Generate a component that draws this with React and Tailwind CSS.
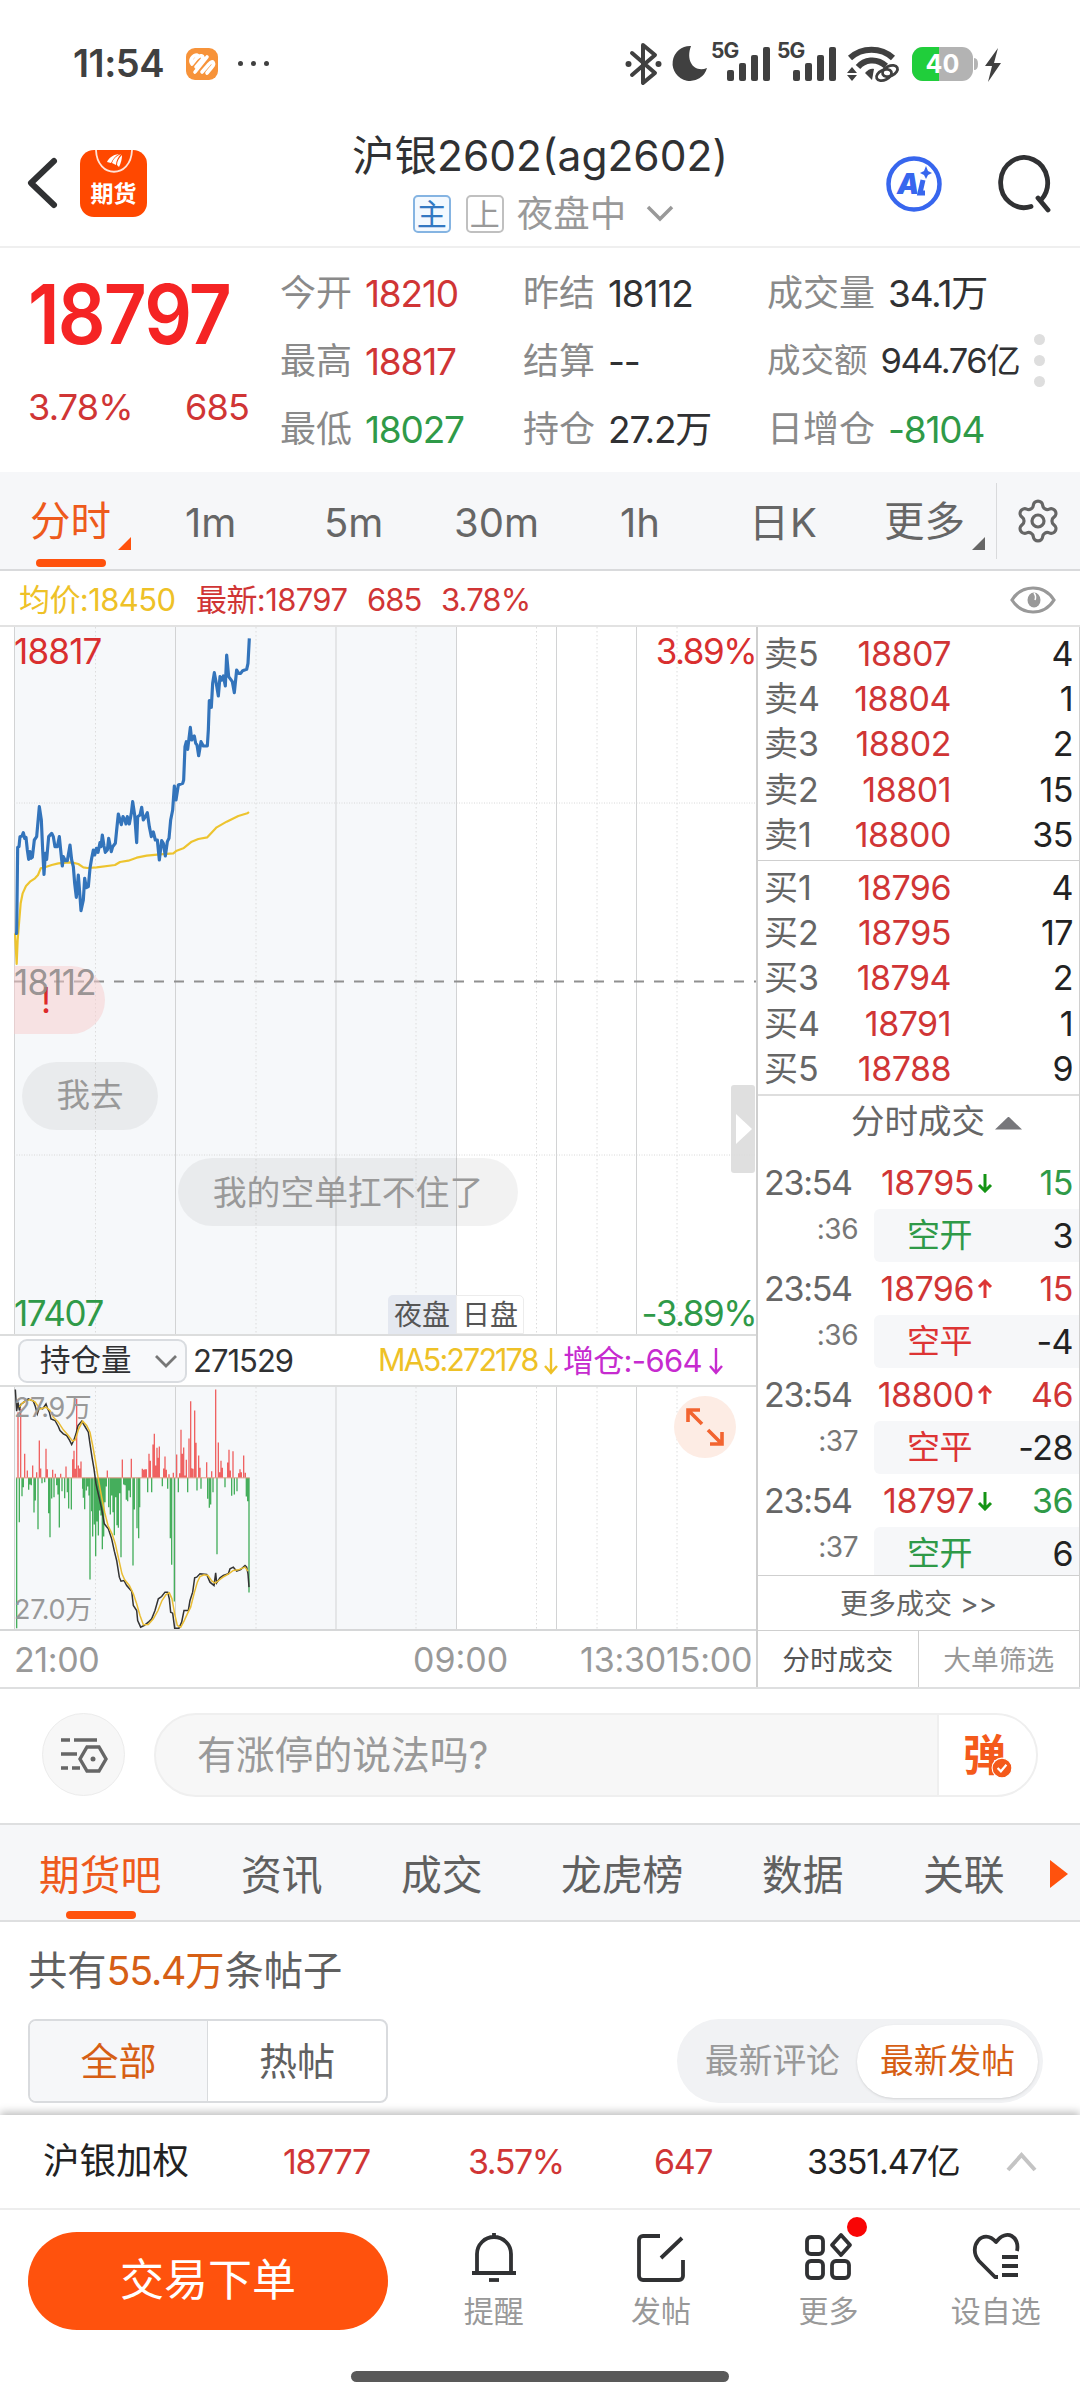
import { Settings } from 'lucide-react'

const PRICE =
  '45,940 50,940 53,682 57,680 60,650 66,648 70,638 74,655 78,652 82,690 86,718 90,695 93,715 97,712 103,660 110,650 118,560 124,600 128,690 132,763 136,700 140,718 146,650 155,640 160,650 165,680 172,680 178,650 182,690 187,738 190,710 196,722 202,722 210,675 215,720 220,740 224,790 229,832 235,765 240,830 243,872 250,840 254,775 259,803 265,800 270,745 275,715 280,690 284,705 289,685 294,697 300,668 303,680 307,645 312,678 316,697 322,690 326,655 330,675 334,695 338,680 346,670 350,630 355,582 360,600 364,614 369,590 375,600 378,612 382,590 388,612 394,580 398,545 404,585 410,668 413,590 420,585 425,562 430,600 436,590 442,578 448,620 454,650 460,636 466,660 472,660 478,720 485,662 490,670 496,708 502,665 507,655 512,600 518,570 523,498 528,540 535,495 548,490 551,480 555,380 559,365 563,388 571,322 575,360 583,348 587,370 591,375 596,407 603,365 610,378 622,378 625,330 628,242 634,262 638,190 643,158 648,185 655,228 660,170 665,180 670,168 676,198 680,105 686,170 697,185 703,218 710,150 716,160 722,160 728,152 740,148 744,130 748,55'

const AVERAGE =
  '45,940 50,1032 53,960 62,850 68,820 78,798 90,785 105,775 114,765 122,745 135,742 155,735 175,730 200,728 215,727 235,732 250,742 262,744 290,742 345,735 360,726 385,722 410,713 440,707 480,703 520,700 530,692 550,685 575,665 595,657 622,652 650,622 680,605 715,588 742,580 747,576'

const OPEN_INTEREST =
  '46,27 50,92 54,65 58,90 62,72 68,68 75,62 85,55 100,62 106,78 112,100 118,82 128,85 138,70 143,85 148,95 153,115 165,120 175,138 180,150 190,160 200,165 208,178 215,192 222,178 228,160 234,135 245,122 255,138 265,155 270,190 276,230 282,265 288,310 296,345 305,385 313,430 325,445 335,475 343,512 350,540 358,590 363,602 372,600 380,615 395,632 400,675 410,690 413,720 422,740 432,735 445,725 455,715 465,690 475,655 485,648 495,635 503,635 508,655 512,695 518,698 524,743 537,743 545,725 552,690 565,690 570,660 578,635 584,592 590,590 600,580 620,582 630,605 642,615 647,577 650,607 660,592 670,585 685,580 690,565 700,560 710,572 722,567 735,555 740,560 744,580 747,620'

const OPEN_INTEREST_MA =
  '58,80 68,66 90,57 105,64 120,86 138,80 150,90 160,110 175,125 190,148 205,165 218,182 226,178 236,145 248,122 260,135 270,155 278,195 286,240 294,290 304,345 314,395 324,435 336,460 346,490 356,535 366,580 374,598 388,615 400,640 410,670 420,705 430,733 445,732 460,715 474,690 486,660 498,642 508,637 516,655 524,700 532,735 542,740 552,722 562,700 572,680 582,640 592,605 600,588 612,583 624,585 636,602 646,608 656,600 672,588 686,580 700,570 715,568 735,560 744,572'

const RISES = [
  [54, 95], [62, 85], [74, 220], [82, 270], [98, 255], [110, 275], [118, 180], [122, 264], [138, 205], [142, 266],
  [158, 268], [166, 280], [182, 280], [198, 258], [218, 236], [222, 211], [226, 265], [230, 55], [235, 255], [239, 264],
  [243, 243], [322, 270], [367, 237], [394, 235], [427, 265], [431, 268], [435, 266], [439, 266], [447, 220], [451, 241],
  [459, 192], [463, 160], [467, 255], [471, 202], [475, 232], [478, 198], [491, 264], [495, 228], [499, 268], [507, 281],
  [520, 277], [530, 222], [539, 278], [543, 148], [547, 220], [551, 201], [555, 285], [559, 238], [567, 174], [572, 62],
  [575, 263], [579, 265], [584, 90], [588, 187], [596, 225], [600, 262], [620, 245], [635, 272], [647, 27], [655, 186],
  [659, 275], [663, 241], [667, 262], [683, 246], [687, 208], [691, 270], [699, 212], [716, 278], [720, 266], [724, 275],
  [731, 225], [736, 277],
]

const FALLS = [
  [50, 743], [58, 425], [66, 347], [70, 320], [86, 328], [90, 312], [94, 314], [102, 396], [106, 360], [114, 446],
  [126, 308], [134, 305], [146, 398], [150, 470], [155, 354], [162, 350], [170, 314], [174, 342], [178, 441], [186, 332],
  [194, 353], [202, 335], [206, 384], [214, 387], [248, 325], [250, 352], [254, 386], [259, 330], [263, 318], [267, 345],
  [270, 597], [275, 392], [278, 468], [283, 432], [287, 527], [291, 423], [295, 465], [299, 390], [303, 405], [307, 506],
  [311, 468], [315, 365], [319, 318], [326, 380], [331, 402], [335, 345], [339, 395], [343, 464], [347, 350], [351, 434],
  [355, 442], [359, 338], [363, 530], [371, 312], [375, 314], [379, 358], [383, 362], [387, 330], [391, 350], [399, 555],
  [403, 387], [411, 443], [416, 473], [419, 380], [443, 335], [455, 335], [487, 317], [503, 325], [511, 473], [515, 553],
  [523, 663], [535, 335], [563, 335], [591, 330], [603, 325], [623, 355], [628, 382], [632, 372], [639, 335], [651, 521],
  [675, 320], [695, 346], [703, 342], [711, 332], [739, 348], [743, 362], [747, 636],
]

const SOLID_X = [175.5, 336, 456.5, 556.5, 636.5]
const DOTTED_X = [95.5, 256, 416, 536.5, 597, 677]

const SELLS = [
  ['卖5', '18807', '4'],
  ['卖4', '18804', '1'],
  ['卖3', '18802', '2'],
  ['卖2', '18801', '15'],
  ['卖1', '18800', '35'],
]

const BUYS = [
  ['买1', '18796', '4'],
  ['买2', '18795', '17'],
  ['买3', '18794', '2'],
  ['买4', '18791', '1'],
  ['买5', '18788', '9'],
]

const TRADES = [
  { sec: ':36', price: '18795', up: false, qty: '15', kind: '空开', delta: '3' },
  { sec: ':36', price: '18796', up: true, qty: '15', kind: '空平', delta: '-4' },
  { sec: ':37', price: '18800', up: true, qty: '46', kind: '空平', delta: '-28' },
  { sec: ':37', price: '18797', up: false, qty: '36', kind: '空开', delta: '6' },
]

function StatusBar() {
  return (
    <div className="h-[125px] pt-[2px] flex items-center text-[#404040]">
      <span className="ml-[73px] w-[113px] text-[38px] font-semibold tracking-[-0.5px] whitespace-nowrap">11:54</span>
      <svg className="w-8 h-8" viewBox="0 0 32 32">
        <rect width="32" height="32" rx="9" fill="#f7933a" />
        <path d="M6 16l4-5c4-5 9-4 6 1l-6 7M9 24l12-15M16 24l7-8c4-5 6 0 3 3l-5 6M6 16c-3-4 1-9 5-9" fill="none" stroke="#fff" strokeWidth="3.600" strokeLinecap="round" strokeLinejoin="round" />
      </svg>
      <span className="ml-[20px] flex gap-[8px]">
        <i className="w-[5px] h-[5px] rounded-full bg-[#404040]" />
        <i className="w-[5px] h-[5px] rounded-full bg-[#404040]" />
        <i className="w-[5px] h-[5px] rounded-full bg-[#404040]" />
      </span>
      <svg className="ml-auto mr-[75px] w-[380px] h-[50px] overflow-visible" viewBox="0 -2 380 50" fill="#404040">
        {/* bluetooth */}
        <path d="M7 12l23 20-12 10V4l12 10L7 34" fill="none" stroke="#404040" strokeWidth="4" strokeLinejoin="round" strokeLinecap="round" />
        <circle cx="3.500" cy="23" r="3" />
        <circle cx="33.500" cy="23" r="3" />
        {/* do not disturb */}
        <path d="M66 5a17.500 17.500 0 1 0 16 22c-12 5-22-6-16-22z" />
        {/* signal */}
        {[86, 152].map((x) => (
          <g key={x} transform={`translate(${x} 0)`}>
            <text x="0" y="16.500" fontSize="21" fontWeight="700" letterSpacing="-1">5G</text>
            <rect x="16" y="29" width="7" height="11" rx="2" />
            <rect x="28" y="22" width="7" height="18" rx="2" />
            <rect x="40" y="14" width="7" height="26" rx="2" />
            <rect x="52" y="6" width="7" height="34" rx="2" />
          </g>
        ))}
        {/* wifi */}
        <path d="M225 17c12-11 31-11 43 0" fill="none" stroke="#404040" strokeWidth="6" />
        <path d="M233 26c6-7 18-10 28-1" fill="none" stroke="#404040" strokeWidth="6" />
        <path d="M240 32c3-4 7-5 9-4l-2 11z" />
        <path d="M222 32l5-6 5 6zM222 34l5 6 5-6z" />
        <g fill="none" stroke="#404040" strokeWidth="2.800">
          <ellipse cx="259" cy="34" rx="8" ry="5" transform="rotate(-25 259 34)" />
          <ellipse cx="265" cy="30" rx="8" ry="5" transform="rotate(-25 265 30)" />
        </g>
        {/* battery */}
        <rect x="287" y="6" width="61" height="34" rx="11" fill="#b3b3b3" />
        <path d="M314 6h-16a11 11 0 0 0-11 11v12a11 11 0 0 0 11 11h16z" fill="#20ce3b" />
        <path d="M349 17q4 0 4 6t-4 6z" fill="#b3b3b3" />
        <text x="317.500" y="32" fontSize="25" fontWeight="700" fill="#fff" textAnchor="middle">40</text>
        <path d="M373 7l-13 18h7l-4 16 13-19h-7z" />
      </svg>
    </div>
  )
}

function Header() {
  return (
    <div className="h-[123px] border-b-2 border-[#efefef] flex text-[#303133]">
      <div className="w-[300px] flex">
        <svg className="ml-[26px] mt-[31px] w-[34px] h-[54px]" viewBox="0 0 34 54">
          <path d="M28 5L5 27l23 22" fill="none" stroke="#303133" strokeWidth="6" strokeLinecap="round" strokeLinejoin="round" />
        </svg>
        <div className="ml-[20px] mt-[25px] w-[67px] h-[67px] rounded-[14px] bg-[#ff4800] flex flex-col items-center text-white">
          <svg className="w-[40px] h-[24px]" viewBox="0 0 40 24">
            <path d="M2 0c1 29 35 29 36 0" fill="none" stroke="#ffe3d8" strokeWidth="1.800" />
            <path d="M13 12c2-4 5-7 12-8-4 2-6 5-8 9zM18 13c1-4 4-7 9-9-3 3-5 7-5 11zM23 15c0-4 2-7 5-10 0 4-1 8-3 12z" fill="#fff" />
          </svg>
          <span className="mt-[9px] text-[23px] leading-none font-bold">期货</span>
        </div>
      </div>
      <div className="w-[480px] pt-[9px] flex flex-col items-center">
        <div className="text-[42.500px] leading-[44px] whitespace-nowrap">沪银2602(ag2602)</div>
        <div className="mt-[17px] ml-[8px] flex items-center leading-none">
          <span className="w-[38px] h-[38px] rounded-[5px] border-2 border-[#85b4e2] bg-[#f3f9ff] text-[30px] leading-none text-[#3378c2] flex items-center justify-center">主</span>
          <span className="ml-[15px] w-[38px] h-[38px] rounded-[5px] border-2 border-[#c0c0c0] text-[30px] leading-none text-[#999] flex items-center justify-center">上</span>
          <span className="ml-[13px] text-[36.500px] text-[#999]">夜盘中</span>
          <svg className="ml-[19px] w-[30px] h-[20px]" viewBox="0 0 30 20">
            <path d="M3 3l12 12L27 3" fill="none" stroke="#999" strokeWidth="3.500" />
          </svg>
        </div>
      </div>
      <svg className="ml-[106px] mt-[30px] w-[56px] h-[58px]" viewBox="0 0 56 58">
        <circle cx="28" cy="29" r="25.500" fill="none" stroke="#3766ee" strokeWidth="4.500" />
        <text x="11" y="39" fontSize="28" fontWeight="900" fontStyle="italic" fill="#3766ee">A</text>
        <path d="M37 25l-3 13h5" fill="none" stroke="#3766ee" strokeWidth="5" />
        <path d="M40 11l2 5 4 2-4 2-2 4-2-4-4-2 4-2z" fill="#3766ee" />
      </svg>
      <svg className="ml-[54px] mt-[30px] w-[56px] h-[58px]" viewBox="0 0 56 58">
        <path d="M35 51.500A23.500 25 0 1 1 45 45" fill="none" stroke="#303133" strokeWidth="4.800" strokeLinecap="round" />
        <path d="M42 43l10 12" stroke="#303133" strokeWidth="4.800" strokeLinecap="round" />
      </svg>
    </div>
  )
}

function Pair({ label, value, tone = 'text-[#303133]', small }) {
  return (
    <div className="h-[68px] flex items-center whitespace-nowrap">
      <span className={small ? 'text-[33.500px] text-[#8a8a8a]' : 'text-[36px] text-[#8a8a8a]'}>{label}</span>
      <span className={`ml-[13px] ${small ? 'text-[34.500px] tracking-[-1.500px]' : 'text-[37px] tracking-[-1.200px]'} ${tone}`}>{value}</span>
    </div>
  )
}

function Quote() {
  return (
    <div className="h-[224px] pt-[11px] flex leading-none">
      <div className="w-[280px] pl-[28px] pt-[21px] text-[#d03535]">
        <div className="h-[68px] flex items-center">
          <span className="origin-left scale-x-[0.9] text-[83px] font-semibold tracking-[-2px] text-[#f52424]">18797</span>
        </div>
        <div className="mt-[25px] w-[221px] h-[68px] flex items-center justify-between text-[36px] tracking-[-0.800px]">
          <span>3.78%</span>
          <span>685</span>
        </div>
      </div>
      <div className="w-[243px]">
        <Pair label="今开" value="18210" tone="text-[#d03535]" />
        <Pair label="最高" value="18817" tone="text-[#d03535]" />
        <Pair label="最低" value="18027" tone="text-[#2f9a48]" />
      </div>
      <div className="w-[244px]">
        <Pair label="昨结" value="18112" />
        <Pair label="结算" value="--" />
        <Pair label="持仓" value="27.2万" />
      </div>
      <div className="w-[262px]">
        <Pair label="成交量" value="34.1万" />
        <Pair label="成交额" value="944.76亿" small />
        <Pair label="日增仓" value="-8104" tone="text-[#2f9a48]" />
      </div>
      <div className="pt-[75px] ml-[5px] flex flex-col gap-[10px]">
        <i className="w-[11px] h-[11px] rounded-full bg-[#dedede]" />
        <i className="w-[11px] h-[11px] rounded-full bg-[#dedede]" />
        <i className="w-[11px] h-[11px] rounded-full bg-[#dedede]" />
      </div>
    </div>
  )
}

function PeriodTabs() {
  return (
    <div className="h-[99px] bg-[#f6f7f9] border-b-2 border-[#d9dadc] flex items-center leading-none text-[40px] text-[#666] whitespace-nowrap">
      <div className="relative w-[185px] h-full pt-[4px] pl-[30px] flex items-center text-[40.500px] text-[#ee5a1c]">
        分时
        <i className="absolute left-[118px] top-[65px] w-[13px] h-[13px] bg-[#ff520d] [clip-path:polygon(100%_0,100%_100%,0_100%)]" />
        <i className="absolute left-[36px] bottom-[2px] w-[70px] h-[8px] rounded-[4px] bg-[#ff520d]" />
      </div>
      <span className="pt-[4px] w-[139px]">1m</span>
      <span className="pt-[4px] w-[130px]">5m</span>
      <span className="pt-[4px] w-[166px]">30m</span>
      <span className="pt-[4px] w-[129px]">1h</span>
      <span className="pt-[4px] w-[135px] tracking-[1px]">日K</span>
      <div className="relative w-[112px] h-full pt-[4px] flex items-center text-[40.500px]">
        更多
        <i className="absolute left-[88px] top-[65px] w-[13px] h-[13px] bg-[#666] [clip-path:polygon(100%_0,100%_100%,0_100%)]" />
      </div>
      <i className="w-px h-[76px] bg-[#d9dadc]" />
      <Settings className="ml-[17px] w-[48px] h-[48px] text-[#666]" strokeWidth={1.6} />
    </div>
  )
}

function Legend() {
  return (
    <div className="h-[56px] pt-[3px] border-b-2 border-[#e2e2e2] flex items-center leading-none text-[31px] tracking-[-0.900px] text-[#d03535] whitespace-nowrap">
      <span className="ml-[19px] w-[177px] text-[#eec127] tracking-[-0.600px]">均价:18450</span>
      <span className="w-[171px] tracking-[-0.600px]">最新:18797</span>
      <span className="w-[74px]">685</span>
      <span>3.78%</span>
      <svg className="ml-auto mr-[24px] w-[46px] h-[30px]" viewBox="0 0 46 30">
        <path d="M2 15C12-1 34-1 44 15C34 31 12 31 2 15z" fill="none" stroke="#999" strokeWidth="3.200" />
        <ellipse cx="24" cy="15" rx="6.500" ry="7.500" fill="#999" />
        <path d="M24 8a7 7 0 0 1 1 7" fill="none" stroke="#fff" strokeWidth="1.500" />
      </svg>
    </div>
  )
}

function Grid({ height }) {
  return (
    <>
      <rect x="14" width="442.500" height={height} fill="#f6f8fa" />
      {DOTTED_X.map((x) => (
        <path key={x} d={`M${x} 0V${height}`} stroke="#dcdcdc" strokeDasharray="1.500 2.500" />
      ))}
      {SOLID_X.map((x) => (
        <path key={x} d={`M${x} 0V${height}`} stroke="#d2d3d4" />
      ))}
      <path d={`M14.500 0V${height}`} stroke="#d2d3d4" />
    </>
  )
}

function PriceChart() {
  return (
    <div className="relative h-[709px] border-b-2 border-[#dcdddd] overflow-hidden leading-none text-[35px]">
      <svg className="block w-[757px] h-[709px]" viewBox="0 0 757 709">
        <Grid height={709} />
        <path d="M14 176H757M14 528H757" stroke="#d8d8d8" strokeDasharray="1 1.500" />
        <path d="M14 354.500H757" stroke="#909090" strokeWidth="2" strokeDasharray="10 10" />
        <g transform="translate(0 -7) scale(.33333)" fill="none" strokeLinejoin="round">
          <polyline points={AVERAGE} stroke="#edc42f" strokeWidth="6.500" />
          <polyline points={PRICE} stroke="#3374bb" strokeWidth="9.500" />
        </g>
      </svg>

      {/* floating comments */}
      <span className="absolute left-[14px] top-[339px] w-[91px] h-[68px] pl-[27px] rounded-r-full bg-[#f8cccc]/50 text-[#dd2a2a] flex items-center">!</span>
      <span className="absolute left-[22px] top-[435px] w-[136px] h-[68px] rounded-full bg-black/5 text-[33.500px] text-[#999] flex items-center justify-center">我去</span>
      <span className="absolute left-[178px] top-[531px] w-[340px] h-[68px] pt-[2px] rounded-full bg-black/5 text-[33.800px] text-[#999] flex items-center justify-center">我的空单扛不住了</span>

      <span className="absolute left-[14px] top-[7px] tracking-[-0.800px] text-[#d92f2f]">18817</span>
      <span className="absolute right-0 top-[7px] tracking-[-1.500px] text-[#d92f2f]">3.89%</span>
      <span className="absolute left-[14px] top-[338px] tracking-[-0.800px] text-[#8e8a8a]/90">18112</span>
      <span className="absolute left-[14px] top-[669px] tracking-[-1.400px] text-[#2f9a48]">17407</span>
      <span className="absolute right-0 top-[669px] tracking-[-1.500px] text-[#2f9a48]">-3.89%</span>

      <div className="absolute left-[388px] bottom-0 h-[39px] flex text-[28px] text-[#555]">
        <span className="w-[68px] rounded-tl-[5px] bg-[#e4e8f0] flex items-center justify-center">夜盘</span>
        <span className="w-[68px] rounded-tr-[5px] border border-[#ececec] bg-white flex items-center justify-center">日盘</span>
      </div>
      <div className="absolute left-[731px] top-[458px] w-[24px] h-[88px] rounded-[3px] bg-[#dcdcdc]/90 flex items-center pl-[5px]">
        <i className="w-[16px] h-[30px] bg-white [clip-path:polygon(0_0,100%_50%,0_100%)]" />
      </div>
    </div>
  )
}

function VolumeChart() {
  return (
    <div className="relative h-[244px] border-b-2 border-[#d6d7d8] leading-none text-[27px] text-[#999]">
      <svg className="block w-[757px] h-[242px]" viewBox="0 0 757 242">
        <Grid height={242} />
        <g transform="translate(0 -6.500) scale(.33333)">
          <path d={RISES.map(([x, y]) => `M${x} 292V${y}`).join('')} stroke="#ef6262" strokeWidth="4" />
          <path d={FALLS.map(([x, y]) => `M${x} 292V${y}`).join('')} stroke="#45ae5c" strokeWidth="4" />
          <path d="M48 292H749" stroke="#e59a86" strokeWidth="3" />
          <polyline points={OPEN_INTEREST} fill="none" stroke="#333" strokeWidth="4.500" />
          <polyline points={OPEN_INTEREST_MA} fill="none" stroke="#e9bd34" strokeWidth="4.500" />
        </g>
      </svg>
      <span className="absolute left-[14px] top-[7px] tracking-[-0.500px]">27.9万</span>
      <span className="absolute left-[14px] top-[209px] tracking-[-0.300px]">27.0万</span>
      <svg className="absolute left-[674px] top-[9px] w-[62px] h-[62px]" viewBox="0 0 62 62">
        <circle cx="31" cy="31" r="31" fill="#fdece4" />
        <path d="M28 28L14 14m0 12V14h12M34 34l14 14m0-12v12H36" fill="none" stroke="#f26430" strokeWidth="3.600" />
      </svg>
    </div>
  )
}

function DownArrow() {
  return (
    <svg className="w-[16px] h-[28px]" viewBox="0 0 16 28">
      <path d="M8 1v25M2 19l6 7 6-7" fill="none" stroke="currentColor" strokeWidth="2.400" />
    </svg>
  )
}

function Charts() {
  return (
    <div className="w-[758px] border-r-2 border-[#cfcfcf]">
      <PriceChart />
      <div className="h-[51px] border-b-2 border-[#dcdddd] flex items-center leading-none text-[31px] tracking-[-0.600px] text-[#303133] whitespace-nowrap">
        <div className="ml-[18px] w-[169px] h-[44px] rounded-[9px] border-2 border-[#d9dce0] bg-[#f8f9fb] pl-[20px] pr-[8px] flex items-center justify-between text-[30.500px] tracking-normal">
          持仓量
          <svg className="w-[22px] h-[14px]" viewBox="0 0 22 14">
            <path d="M1 2l10 10L21 2" fill="none" stroke="#777" strokeWidth="2.800" />
          </svg>
        </div>
        <span className="ml-[6px] w-[185px] tracking-[-1px]">271529</span>
        <span className="w-[165px] text-[30.500px] text-[#eec127] tracking-[-1.900px]">MA5:272178</span>
        <span className="text-[#eec127]"><DownArrow /></span>
        <span className="ml-[4px] w-[145px] text-[#c62bcf] tracking-[-0.700px]">增仓:-664</span>
        <span className="text-[#c62bcf]"><DownArrow /></span>
      </div>
      <VolumeChart />
      <div className="h-[57px] flex items-center leading-none text-[34px] text-[#999]">
        <span className="ml-[14px] w-[399px] tracking-[-0.400px]">21:00</span>
        <span className="w-[167px]">09:00</span>
        <span className="tracking-[-0.200px]">13:3015:00</span>
      </div>
    </div>
  )
}

function BookRows({ rows }) {
  return rows.map(([label, price, qty]) => (
    <div key={label} className="h-[45.400px] pl-[6px] pr-[6px] flex items-center">
      <span className="w-[61px] text-[#666] tracking-normal">{label}</span>
      <span className="w-[126px] text-right text-[#d03535]">{price}</span>
      <span className="flex-1 text-right text-[#222]">{qty}</span>
    </div>
  ))
}

function TradeArrow({ up }) {
  return (
    <svg className="ml-[3px] w-[16px] h-[20px]" viewBox="0 0 16 20">
      <path
        d={up ? 'M8 19V2M2 8l6-6 6 6' : 'M8 1v17M2 12l6 6 6-6'}
        fill="none"
        stroke={up ? '#dd3434' : '#149414'}
        strokeWidth="3"
      />
    </svg>
  )
}

function OrderBook() {
  return (
    <div className="flex-1 border-r border-[#d0d0d0] flex flex-col leading-none text-[34px] tracking-[-0.500px] whitespace-nowrap">
      <div className="shrink-0 h-[234px] pt-[4px] border-b border-[#cfcfcf]"><BookRows rows={SELLS} /></div>
      <div className="shrink-0 h-[235px] pt-[4px] border-b-2 border-[#dedede]"><BookRows rows={BUYS} /></div>
      <div className="shrink-0 h-[60px] pb-[9px] pl-[93px] flex items-center text-[33.500px] tracking-normal text-[#666]">
        分时成交
        <i className="ml-[10px] mt-[3px] w-[27px] h-[13px] bg-[#77777b] [clip-path:polygon(50%_0,100%_100%,0_100%)]" />
      </div>
      <div className="shrink-0 h-[420px] overflow-hidden border-b border-[#cfcfcf]">
        {TRADES.map((t, i) => (
          <div key={i} className="h-[106px]">
            <div className="h-[53px] pl-[6px] pr-[6px] flex items-center">
              <span className="w-[96px] text-[#666] tracking-[-1.300px]">23:54</span>
              <span className="w-[114px] text-right text-[#d03535]">{t.price}</span>
              <TradeArrow up={t.up} />
              <span className={`flex-1 text-right ${t.up ? 'text-[#d03535]' : 'text-[#2f9a48]'}`}>{t.qty}</span>
            </div>
            <div className="h-[53px] flex">
              <span className="w-[100px] mr-[16px] pt-[6px] text-right text-[28px] text-[#777]">{t.sec}</span>
              <div className="flex-1 pl-[33px] pr-[6px] rounded-l-[6px] bg-[#f6f7f9] flex items-center justify-between text-[#222]">
                <span className={`text-[33px] ${t.up ? 'text-[#dd3434]' : 'text-[#2f9a48]'}`}>{t.kind}</span>
                {t.delta}
              </div>
            </div>
          </div>
        ))}
      </div>
      <div className="shrink-0 h-[55px] pt-[2px] border-b border-[#cfcfcf] flex items-center justify-center text-[28px] tracking-normal text-[#666]">更多成交 &gt;&gt;</div>
      <div className="flex-1 grid grid-cols-2 items-center text-[27.700px] tracking-normal">
        <span className="h-full pt-[3px] border-r border-[#cfcfcf] flex items-center justify-center text-[#555]">分时成交</span>
        <span className="h-full pt-[3px] flex items-center justify-center text-[#999]">大单筛选</span>
      </div>
    </div>
  )
}

function CommentBar() {
  return (
    <div className="h-[134px] pt-[24px] flex leading-none">
      <div className="ml-[42px] w-[83px] h-[83px] rounded-full border border-[#ececec] bg-[#f7f7f7] flex items-center justify-center">
        <svg className="w-[48px] h-[40px]" viewBox="0 0 48 40" fill="none" stroke="#666" strokeWidth="3.400">
          <path d="M1 5h9M14 5h23M1 19h16M1 33h7M12 33h8" />
          <path d="M27 12h12l7 12-7 12H27l-7-12z" />
          <circle cx="33" cy="24" r="2.500" fill="#666" stroke="none" />
        </svg>
      </div>
      <div className="ml-[29px] w-[884px] h-[84px] rounded-full border-2 border-[#efefef] bg-[#f7f7f7] flex items-center overflow-hidden">
        <span className="flex-1 pl-[41px] text-[38.800px] text-[#999]">有涨停的说法吗?</span>
        <div className="relative w-[99px] h-full border-l-2 border-[#efefef] bg-white pl-[24px] flex items-center text-[43px] font-bold text-[#f45a1b]">
          弹
          <svg className="absolute left-[52px] top-[42px] w-[22px] h-[22px]" viewBox="0 0 20 20">
            <circle cx="10" cy="10" r="9" fill="#f45a1b" stroke="#fff" />
            <path d="M6 10l3 3 5-6" fill="none" stroke="#fff" strokeWidth="2" />
          </svg>
        </div>
      </div>
    </div>
  )
}

function SectionTabs() {
  return (
    <div className="h-[99px] border-y-2 border-[#dedfe0] bg-[#f6f7f9] flex items-center leading-none text-[40.800px] text-[#606060] whitespace-nowrap">
      <div className="relative h-full w-[241px] pt-[5px] pl-[39px] flex items-center text-[#ee5a1c]">
        期货吧
        <i className="absolute left-[66px] bottom-[1px] w-[70px] h-[8px] rounded-[4px] bg-[#ff520d]" />
      </div>
      <span className="pt-[5px] w-[160px]">资讯</span>
      <span className="pt-[5px] w-[160px]">成交</span>
      <span className="pt-[5px] w-[201px]">龙虎榜</span>
      <span className="pt-[5px] w-[161px]">数据</span>
      <span className="pt-[5px] w-[127px]">关联</span>
      <i className="mt-[3px] w-[18px] h-[28px] bg-[#ff520d] [clip-path:polygon(0_0,100%_50%,0_100%)]" />
    </div>
  )
}

function Posts() {
  return (
    <div className="h-[193px] leading-none">
      <div className="pt-[29px] pl-[28px] h-[97px] text-[39.300px] text-[#606060]">
        共有<span className="text-[#d65f15]"><span className="tracking-[-1.200px]">55.4</span>万</span>条帖子
      </div>
      <div className="pl-[28px] pr-[37px] flex justify-between">
        <div className="w-[360px] h-[84px] rounded-[8px] border-2 border-[#d9dbde] overflow-hidden grid grid-cols-2 text-[38px]">
          <span className="border-r border-[#d9dbde] bg-[#f6f7f9] text-[#d65f15] flex items-center justify-center">全部</span>
          <span className="text-[#606060] flex items-center justify-center">热帖</span>
        </div>
        <div className="w-[366px] h-[84px] rounded-full bg-[#f1f2f4] pl-[28px] pr-[5px] flex items-center justify-between text-[33.700px] text-[#999]">
          最新评论
          <span className="w-[181px] h-[73px] rounded-full bg-white shadow-sm text-[#d65f15] flex items-center justify-center">最新发帖</span>
        </div>
      </div>
    </div>
  )
}

function IndexRow() {
  return (
    <div className="h-[95px] border-b-2 border-[#ededed] bg-white shadow-[0_-3px_8px_rgba(0,0,0,0.25)] [clip-path:inset(-14px_0_0_0)] flex items-center leading-none text-[34px] tracking-[-1.400px] text-[#d03535] whitespace-nowrap">
      <span className="ml-[43px] w-[240px] text-[36.500px] tracking-normal text-[#222]">沪银加权</span>
      <span className="w-[185px]">18777</span>
      <span className="w-[186px]">3.57%</span>
      <span className="w-[153px]">647</span>
      <span className="w-[199px] text-[#222] tracking-[-1.100px]">3351.47亿</span>
      <svg className="w-[31px] h-[20px]" viewBox="0 0 31 20">
        <path d="M2 18L15.500 3 29 18" fill="none" stroke="#c4c4c4" strokeWidth="4" />
      </svg>
    </div>
  )
}

const ACTIONS = [
  {
    label: '提醒',
    icon: (
      <>
        <path d="M8 40V22a17 17 0 0 1 34 0v18M3 41h44M25 5V1" />
        <path d="M20 48h10" />
      </>
    ),
  },
  {
    label: '发帖',
    icon: <path d="M24 4H7a4 4 0 0 0-4 4v36a4 4 0 0 0 4 4h36a4 4 0 0 0 4-4V28M46 6L25 26" />,
  },
  {
    label: '更多',
    dot: true,
    icon: (
      <>
        <rect x="4" y="5" width="16" height="17" rx="4" />
        <rect x="4" y="29" width="16" height="17" rx="4" />
        <rect x="29" y="29" width="17" height="17" rx="4" />
        <path d="M38 3l9 10-9 10-9-10z" strokeLinejoin="round" />
      </>
    ),
  },
  {
    label: '设自选',
    icon: (
      <>
        <path d="M27 45h-3L8 29C-4 15 12-5 25 10 36-4 49 5 46 19" strokeLinejoin="round" />
        <path d="M31 25h16M31 34h16M31 43h16" />
      </>
    ),
  },
]

function BottomBar() {
  return (
    <div className="flex-1 bg-white flex flex-col leading-none">
      <div className="flex pt-[22px]">
        <button className="ml-[28px] w-[360px] h-[98px] pb-[2px] rounded-full bg-[#ff520d] text-[44px] text-white">交易下单</button>
        <div className="ml-[22px] flex">
          {ACTIONS.map((a) => (
            <div key={a.label} className="relative w-[167.400px] flex flex-col items-center text-[30px] text-[#999]">
              <svg className="w-[50px] h-[50px]" viewBox="0 0 50 50" fill="none" stroke="#303133" strokeWidth="3.800">
                {a.icon}
              </svg>
              <span className="mt-[14px]">{a.label}</span>
              {a.dot && <i className="absolute left-[102px] top-[-15px] w-[20px] h-[20px] rounded-full bg-[#f90505]" />}
            </div>
          ))}
        </div>
      </div>
      <i className="mx-auto mt-[41px] w-[378px] h-[11px] rounded-full bg-[#595959]" />
    </div>
  )
}

export default function App() {
  return (
    <div className="w-[1080px] h-[2400px] overflow-hidden bg-white flex flex-col font-['Inter','Noto_Sans_CJK_SC',sans-serif]">
      <StatusBar />
      <Header />
      <Quote />
      <PeriodTabs />
      <Legend />
      <div className="h-[1062px] border-b-2 border-[#dedfe0] flex">
        <Charts />
        <OrderBook />
      </div>
      <CommentBar />
      <SectionTabs />
      <Posts />
      <IndexRow />
      <BottomBar />
    </div>
  )
}
